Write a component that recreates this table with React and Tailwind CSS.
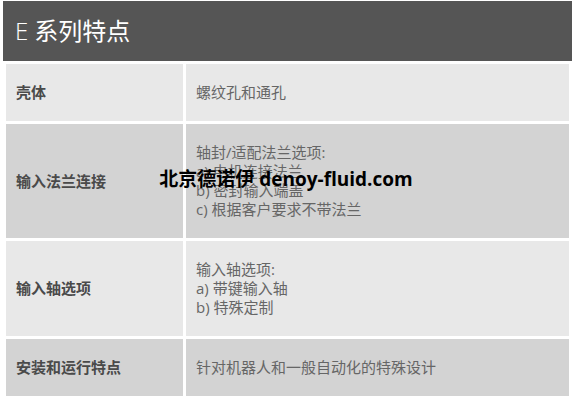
import React from "react";

const rows = [
  { label: "壳体", lines: ["螺纹孔和通孔"], bg: "bg-[#e8e8e8]" },
  {
    label: "输入法兰连接",
    lines: ["轴封/适配法兰选项:", "a) 电机连接法兰", "b) 密封输入端盖", "c) 根据客户要求不带法兰"],
    bg: "bg-[#d3d3d3]",
  },
  { label: "输入轴选项", lines: ["输入轴选项:", "a) 带键输入轴", "b) 特殊定制"], bg: "bg-[#e8e8e8]" },
  { label: "安装和运行特点", lines: ["针对机器人和一般自动化的特殊设计"], bg: "bg-[#d3d3d3]" },
];

export default function App() {
  return (
    <div
      className="relative w-[572px] h-[396px] overflow-hidden bg-white"
      style={{ fontFamily: '"Open Sans", "Noto Sans CJK SC", sans-serif' }}
    >
      <div className="ml-[3px] mt-[1px] h-[60px] bg-[#555555] flex items-center pl-[12px] text-white text-[24px] leading-none">
        <span className="font-light">E</span>
        <span className="ml-[6px]">系列特点</span>
      </div>
      <div className="ml-[3px] w-[569px] p-[3px] grid grid-cols-[177px_1fr] gap-[3px]">
        {rows.map((r) => (
          <React.Fragment key={r.label}>
            <div className={`${r.bg} flex items-center px-[10px] py-[19px] text-[15px] leading-[19px] font-bold text-[#4a4a4a]`}>
              {r.label}
            </div>
            <div className={`${r.bg} flex flex-col justify-center px-[10px] py-[19px] text-[15px] leading-[19px] text-[#666666]`}>
              {r.lines.map((l) => (
                <div key={l}>{l}</div>
              ))}
            </div>
          </React.Fragment>
        ))}
      </div>
      <div className="absolute left-0 right-0 top-[167px] flex justify-center">
        <span className="text-[19px] leading-[25px] font-bold text-black">北京德诺伊 denoy-fluid.com</span>
      </div>
    </div>
  );
}
